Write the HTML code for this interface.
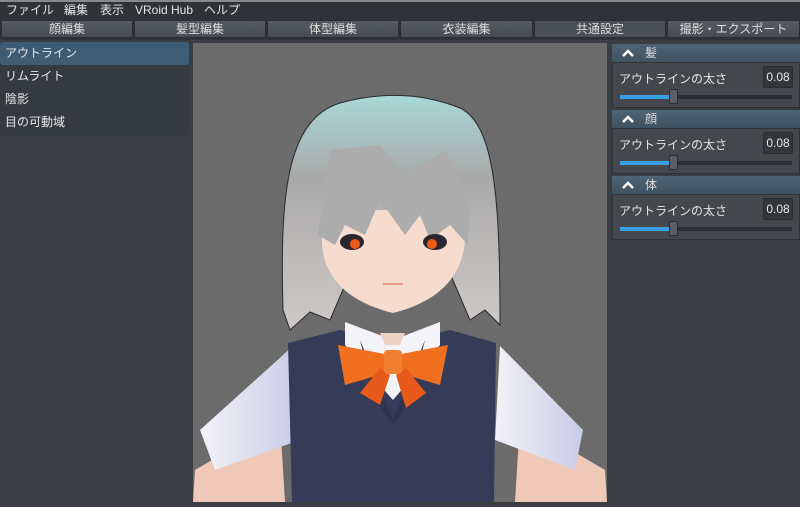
<!DOCTYPE html>
<html><head><meta charset="utf-8"><style>
*{margin:0;padding:0;box-sizing:border-box}
body{width:800px;height:502px;overflow:hidden;background:#3a3e43;font-family:"Liberation Sans","Noto Sans CJK JP",sans-serif;color:#e6e6e6;position:relative}
.menu{position:absolute;left:0;top:0;width:800px;height:19px;background:#2f3236;border-top:2px solid #8a8a8a;font-size:12px;line-height:17px}
.menu span{position:absolute;top:0}
.tabs{position:absolute;top:19px;left:0;width:800px;height:21px;background:#2f3236}
.tab{position:absolute;top:1px;height:18px;background:linear-gradient(#565b61,#474c52);border:1px solid #2a2d31;font-size:12px;line-height:17px;text-align:center;color:#ddd}
.tab.act{background:#4b5056}
.left{position:absolute;left:0;top:42px;width:189px;height:94px;background:#353a40;border-radius:3px}
.li{height:23px;font-size:12px;line-height:23px;padding-left:5px}
.li.sel{background:#3e5c74;border-radius:3px}
.vp{position:absolute;left:193px;top:43px;width:414px;height:459px;background:#6b6b6b}
.right{position:absolute;left:611px;top:43px;width:189px;height:459px;background:#3a3e43}
.hd{position:absolute;left:1px;width:188px;height:18px;background:linear-gradient(#4e6474,#3f5261);font-size:12px;line-height:18px;color:#ddd}
.hd svg{position:absolute;left:10px;top:5px}
.hd i{position:absolute;left:33px;font-style:normal}
.bd{position:absolute;left:1px;width:188px;height:46px;background:#44484d;border:1px solid #2f3236}
.lab{position:absolute;left:6px;top:7px;font-size:12px}
.val{position:absolute;left:150px;top:3px;width:30px;height:22px;background:#33363a;border:1px solid #2a2c30;font-size:12px;line-height:20px;text-align:center;border-radius:2px}
.trk{position:absolute;left:7px;top:32px;width:172px;height:4px;background:#2a2d31}
.fill{position:absolute;left:7px;top:32px;width:50px;height:4px;background:#3aa0e6}
.th{position:absolute;left:56px;top:26px;width:9px;height:15px;background:#5a5f66;border:1px solid #2a2d31;border-radius:2px}
</style></head><body>
<div class="menu"><span style="left:6px">ファイル</span><span style="left:64px">編集</span><span style="left:100px">表示</span><span style="left:135px">VRoid Hub</span><span style="left:204px">ヘルプ</span></div>
<div class="tabs">
<div class="tab" style="left:1px;width:132px">顔編集</div>
<div class="tab" style="left:134px;width:132px">髪型編集</div>
<div class="tab" style="left:267px;width:132px">体型編集</div>
<div class="tab" style="left:400px;width:133px">衣装編集</div>
<div class="tab act" style="left:534px;width:132px">共通設定</div>
<div class="tab" style="left:667px;width:133px">撮影・エクスポート</div>
</div>
<div class="left"><div class="li sel">アウトライン</div><div class="li">リムライト</div><div class="li">陰影</div><div class="li">目の可動域</div></div>
<div class="vp"><svg width="414" height="459" viewBox="193 43 414 459">
<defs><linearGradient id="h" x1="0" y1="0" x2="0" y2="1"><stop offset="0" stop-color="#a8d8d8"/><stop offset=".35" stop-color="#a9a9a9"/><stop offset="1" stop-color="#cfc9c7"/></linearGradient>
<linearGradient id="s" x1="0" y1="0" x2="1" y2="0"><stop offset="0" stop-color="#f2f2f6"/><stop offset="1" stop-color="#c9cbe8"/></linearGradient></defs>
<path d="M195 470 L280 420 L285 502 L193 502Z" fill="#f0c8b8"/>
<path d="M605 470 L520 420 L515 502 L607 502Z" fill="#f0c8b8"/>
<path d="M200 430 L293 346 L300 440 L215 470Z" fill="url(#s)"/>
<path d="M583 430 L500 346 L495 440 L575 470Z" fill="url(#s)"/>
<path d="M288 343 L340 330 L393 345 L450 330 L496 343 L494 502 L292 502Z" fill="#363b58"/>
<path d="M345 322 L393 340 L440 322 L440 345 L393 400 L345 345Z" fill="#f4f4f8"/>
<path d="M360 340 L393 420 L425 340 L410 400 L393 425 L375 400Z" fill="#2e3350"/>
<path d="M380 333 L405 333 L400 345 L385 345Z" fill="#f0d0c2"/>
<path d="M338 345 L390 355 L390 372 L345 385Z" fill="#f07020"/>
<path d="M448 345 L396 355 L396 372 L440 385Z" fill="#f07020"/>
<path d="M380 368 L360 393 L380 405 L390 375Z M406 368 L426 393 L406 408 L396 375Z" fill="#e85a1a"/>
<rect x="384" y="350" width="18" height="24" rx="4" fill="#f08030"/>
<path d="M283 310 C280 200 285 120 340 103 C380 92 420 92 460 108 C495 125 500 200 500 325 L485 310 L470 320 L440 250 L360 250 L330 320 L310 312 L290 330Z" fill="url(#h)" stroke="#2a2a2a" stroke-width="1"/>
<path d="M322 235 C320 270 340 300 393 313 C445 300 465 270 465 235 L455 210 L330 210Z" fill="#f6dbcf"/>
<path d="M318 235 L330 150 L380 145 L405 175 L445 150 L470 200 L468 245 L450 225 L430 240 L420 215 L405 235 L380 200 L365 235 L345 225 L335 245Z" fill="#acacac"/>
<ellipse cx="352" cy="242" rx="12" ry="8" fill="#2a2630"/><circle cx="355" cy="244" r="5" fill="#f05a18"/>
<ellipse cx="435" cy="242" rx="12" ry="8" fill="#2a2630"/><circle cx="432" cy="244" r="5" fill="#f05a18"/>
<path d="M383 284 L403 284" stroke="#e89a88" stroke-width="2"/>
</svg></div>
<div class="right">
<div class="hd" style="top:1px"><svg width="12" height="8"><path d="M1 7 L6 2 L11 7" stroke="#fff" stroke-width="2.5" fill="none"/></svg><i>髪</i></div>
<div class="bd" style="top:19px"><span class="lab">アウトラインの太さ</span><div class="val">0.08</div><div class="trk"></div><div class="fill"></div><div class="th"></div></div>
<div class="hd" style="top:67px"><svg width="12" height="8"><path d="M1 7 L6 2 L11 7" stroke="#fff" stroke-width="2.5" fill="none"/></svg><i>顔</i></div>
<div class="bd" style="top:85px"><span class="lab">アウトラインの太さ</span><div class="val">0.08</div><div class="trk"></div><div class="fill"></div><div class="th"></div></div>
<div class="hd" style="top:133px"><svg width="12" height="8"><path d="M1 7 L6 2 L11 7" stroke="#fff" stroke-width="2.5" fill="none"/></svg><i>体</i></div>
<div class="bd" style="top:151px"><span class="lab">アウトラインの太さ</span><div class="val">0.08</div><div class="trk"></div><div class="fill"></div><div class="th"></div></div>
</div>
</body></html>
